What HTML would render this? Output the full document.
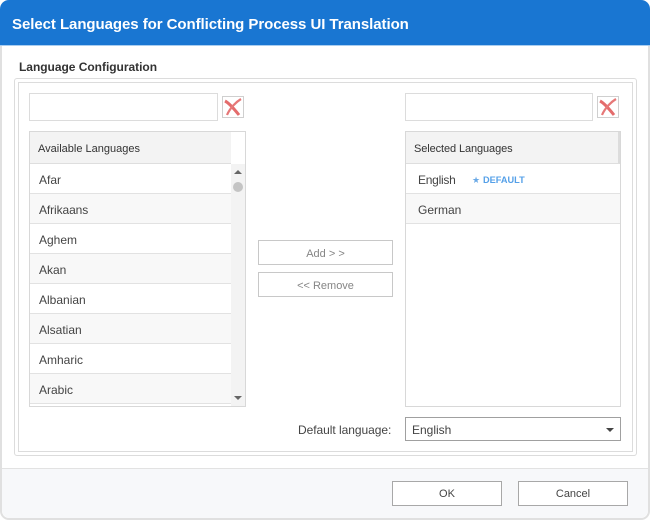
<!DOCTYPE html>
<html><head><meta charset="utf-8">
<style>
html,body{margin:0;padding:0;width:650px;height:520px;overflow:hidden;background:#fff}
body{position:relative;font-family:"Liberation Sans",sans-serif;color:#444}
div,span{position:absolute;box-sizing:border-box}
.t{white-space:nowrap;font-size:12px;line-height:16px}
.win{left:0;top:0;width:650px;height:520px;border-radius:9px;background:#fff;overflow:hidden;border:2px solid #e0e0e0;border-top:0}
.hd{left:0;top:0;width:650px;height:46px;background:#1976d2;border-radius:9px 9px 0 0;border-bottom:1px solid #a9cdf0}
.ft{left:2px;top:468px;width:646px;height:50px;background:#f7f8fa;border-top:1px solid #e2e2e2;border-radius:0 0 8px 8px}
.box{border:1px solid #dcdcdc;background:#fff}
.row{height:30px;border-bottom:1px solid #e2e2e2;background:#fff}
.alt{background:#f8f8f8}
.btn{border:1px solid #c8c8c8;background:#fff;text-align:center;font-size:11px;color:#858585;white-space:nowrap}
.bb{border:1px solid #a8a8a8;background:#fff;text-align:center;font-size:11px;color:#444;line-height:25px;height:25px;width:110px;top:481px}
</style></head>
<body>
<div class="win"></div>
<div class="hd"></div>
<div class="ft"></div>
<div class="t" style="left:12px;top:15px;font-size:15px;font-weight:bold;color:#fff;line-height:19px;letter-spacing:-.06px">Select Languages for Conflicting Process UI Translation</div>
<div class="t" style="left:19px;top:59px;font-weight:bold;font-size:12px;color:#333;letter-spacing:-.03px">Language Configuration</div>

<div class="box" style="left:14px;top:78px;width:623px;height:378px;border-radius:3px"></div>
<div class="box" style="left:18px;top:82px;width:615px;height:370px"></div>

<div class="box" style="left:29px;top:93px;width:189px;height:28px"></div>
<div class="box" style="left:222px;top:96px;width:22px;height:22px;border-color:#cfcfcf">
<svg width="20" height="20" style="position:absolute;left:0;top:0"><path d="M2 4C6 6 12 13 16 18" stroke="#e46c6c" stroke-width="3" fill="none"/><path d="M18 2C13 5 7 11 4 18" stroke="#e67878" stroke-width="2.2" fill="none"/></svg>
</div>
<div class="box" style="left:405px;top:93px;width:188px;height:28px"></div>
<div class="box" style="left:597px;top:96px;width:22px;height:22px;border-color:#cfcfcf">
<svg width="20" height="20" style="position:absolute;left:0;top:0"><path d="M2 4C6 6 12 13 16 18" stroke="#e46c6c" stroke-width="3" fill="none"/><path d="M18 2C13 5 7 11 4 18" stroke="#e67878" stroke-width="2.2" fill="none"/></svg>
</div>

<!-- left list -->
<div class="box" style="left:29px;top:131px;width:217px;height:276px;overflow:hidden;border-color:#d8d8d8">
 <div style="left:0;top:0;width:201px;height:32px;background:#f3f3f3;border-bottom:1px solid #dedede"></div>
 <div style="left:201px;top:32px;width:14px;height:242px;background:#f3f3f3"></div>
 <div class="row" style="left:0;top:32px;width:201px"></div>
 <div class="row alt" style="left:0;top:62px;width:201px"></div>
 <div class="row" style="left:0;top:92px;width:201px"></div>
 <div class="row alt" style="left:0;top:122px;width:201px"></div>
 <div class="row" style="left:0;top:152px;width:201px"></div>
 <div class="row alt" style="left:0;top:182px;width:201px"></div>
 <div class="row" style="left:0;top:212px;width:201px"></div>
 <div class="row alt" style="left:0;top:242px;width:201px"></div>
 <div style="left:203px;top:50px;width:10px;height:10px;border-radius:50%;background:#c4c4c4"></div>
 <div style="left:204px;top:38px;width:0;height:0;border-left:4px solid transparent;border-right:4px solid transparent;border-bottom:4px solid #666"></div>
 <div style="left:204px;top:264px;width:0;height:0;border-left:4px solid transparent;border-right:4px solid transparent;border-top:4px solid #666"></div>
</div>
<div class="t" style="left:38px;top:141px;font-size:11px;color:#333">Available Languages</div>
<div class="t" style="left:39px;top:172px">Afar</div>
<div class="t" style="left:39px;top:202px;letter-spacing:-.1px">Afrikaans</div>
<div class="t" style="left:39px;top:232px">Aghem</div>
<div class="t" style="left:39px;top:262px">Akan</div>
<div class="t" style="left:39px;top:292px">Albanian</div>
<div class="t" style="left:39px;top:322px">Alsatian</div>
<div class="t" style="left:39px;top:352px">Amharic</div>
<div class="t" style="left:39px;top:382px">Arabic</div>

<!-- right list -->
<div class="box" style="left:405px;top:131px;width:216px;height:276px;overflow:hidden;border-color:#d8d8d8">
 <div style="left:0;top:0;width:214px;height:32px;background:#f3f3f3;border-bottom:1px solid #dedede;border-right:2px solid #dcdcdc"></div>
 <div class="row" style="left:0;top:32px;width:214px"></div>
 <div class="row alt" style="left:0;top:62px;width:214px"></div>
</div>
<div class="t" style="left:414px;top:141px;font-size:11px;color:#333;letter-spacing:-.1px">Selected Languages</div>
<div class="t" style="left:418px;top:172px;letter-spacing:-.25px">English</div>
<div class="t" style="left:472px;top:172px;font-size:9px;color:#6aa9e6">★</div>
<div class="t" style="left:483px;top:172px;font-size:9.2px;font-weight:bold;color:#55a0e8">DEFAULT</div>
<div class="t" style="left:418px;top:202px">German</div>

<!-- middle buttons -->
<div class="btn" style="left:258px;top:240px;width:135px;height:25px;line-height:26px;word-spacing:0">Add &gt; &gt;</div>
<div class="btn" style="left:258px;top:272px;width:135px;height:25px;line-height:26px">&lt;&lt; Remove</div>

<div class="t" style="left:298px;top:422px;letter-spacing:-.05px">Default language:</div>
<div class="box" style="left:405px;top:417px;width:216px;height:24px;border-color:#a0a0a0"></div>
<div class="t" style="left:412px;top:422px">English</div>
<div style="left:606px;top:428px;width:0;height:0;border-left:4px solid transparent;border-right:4px solid transparent;border-top:4px solid #444"></div>

<div class="bb" style="left:392px">OK</div>
<div class="bb" style="left:518px">Cancel</div>
</body></html>
